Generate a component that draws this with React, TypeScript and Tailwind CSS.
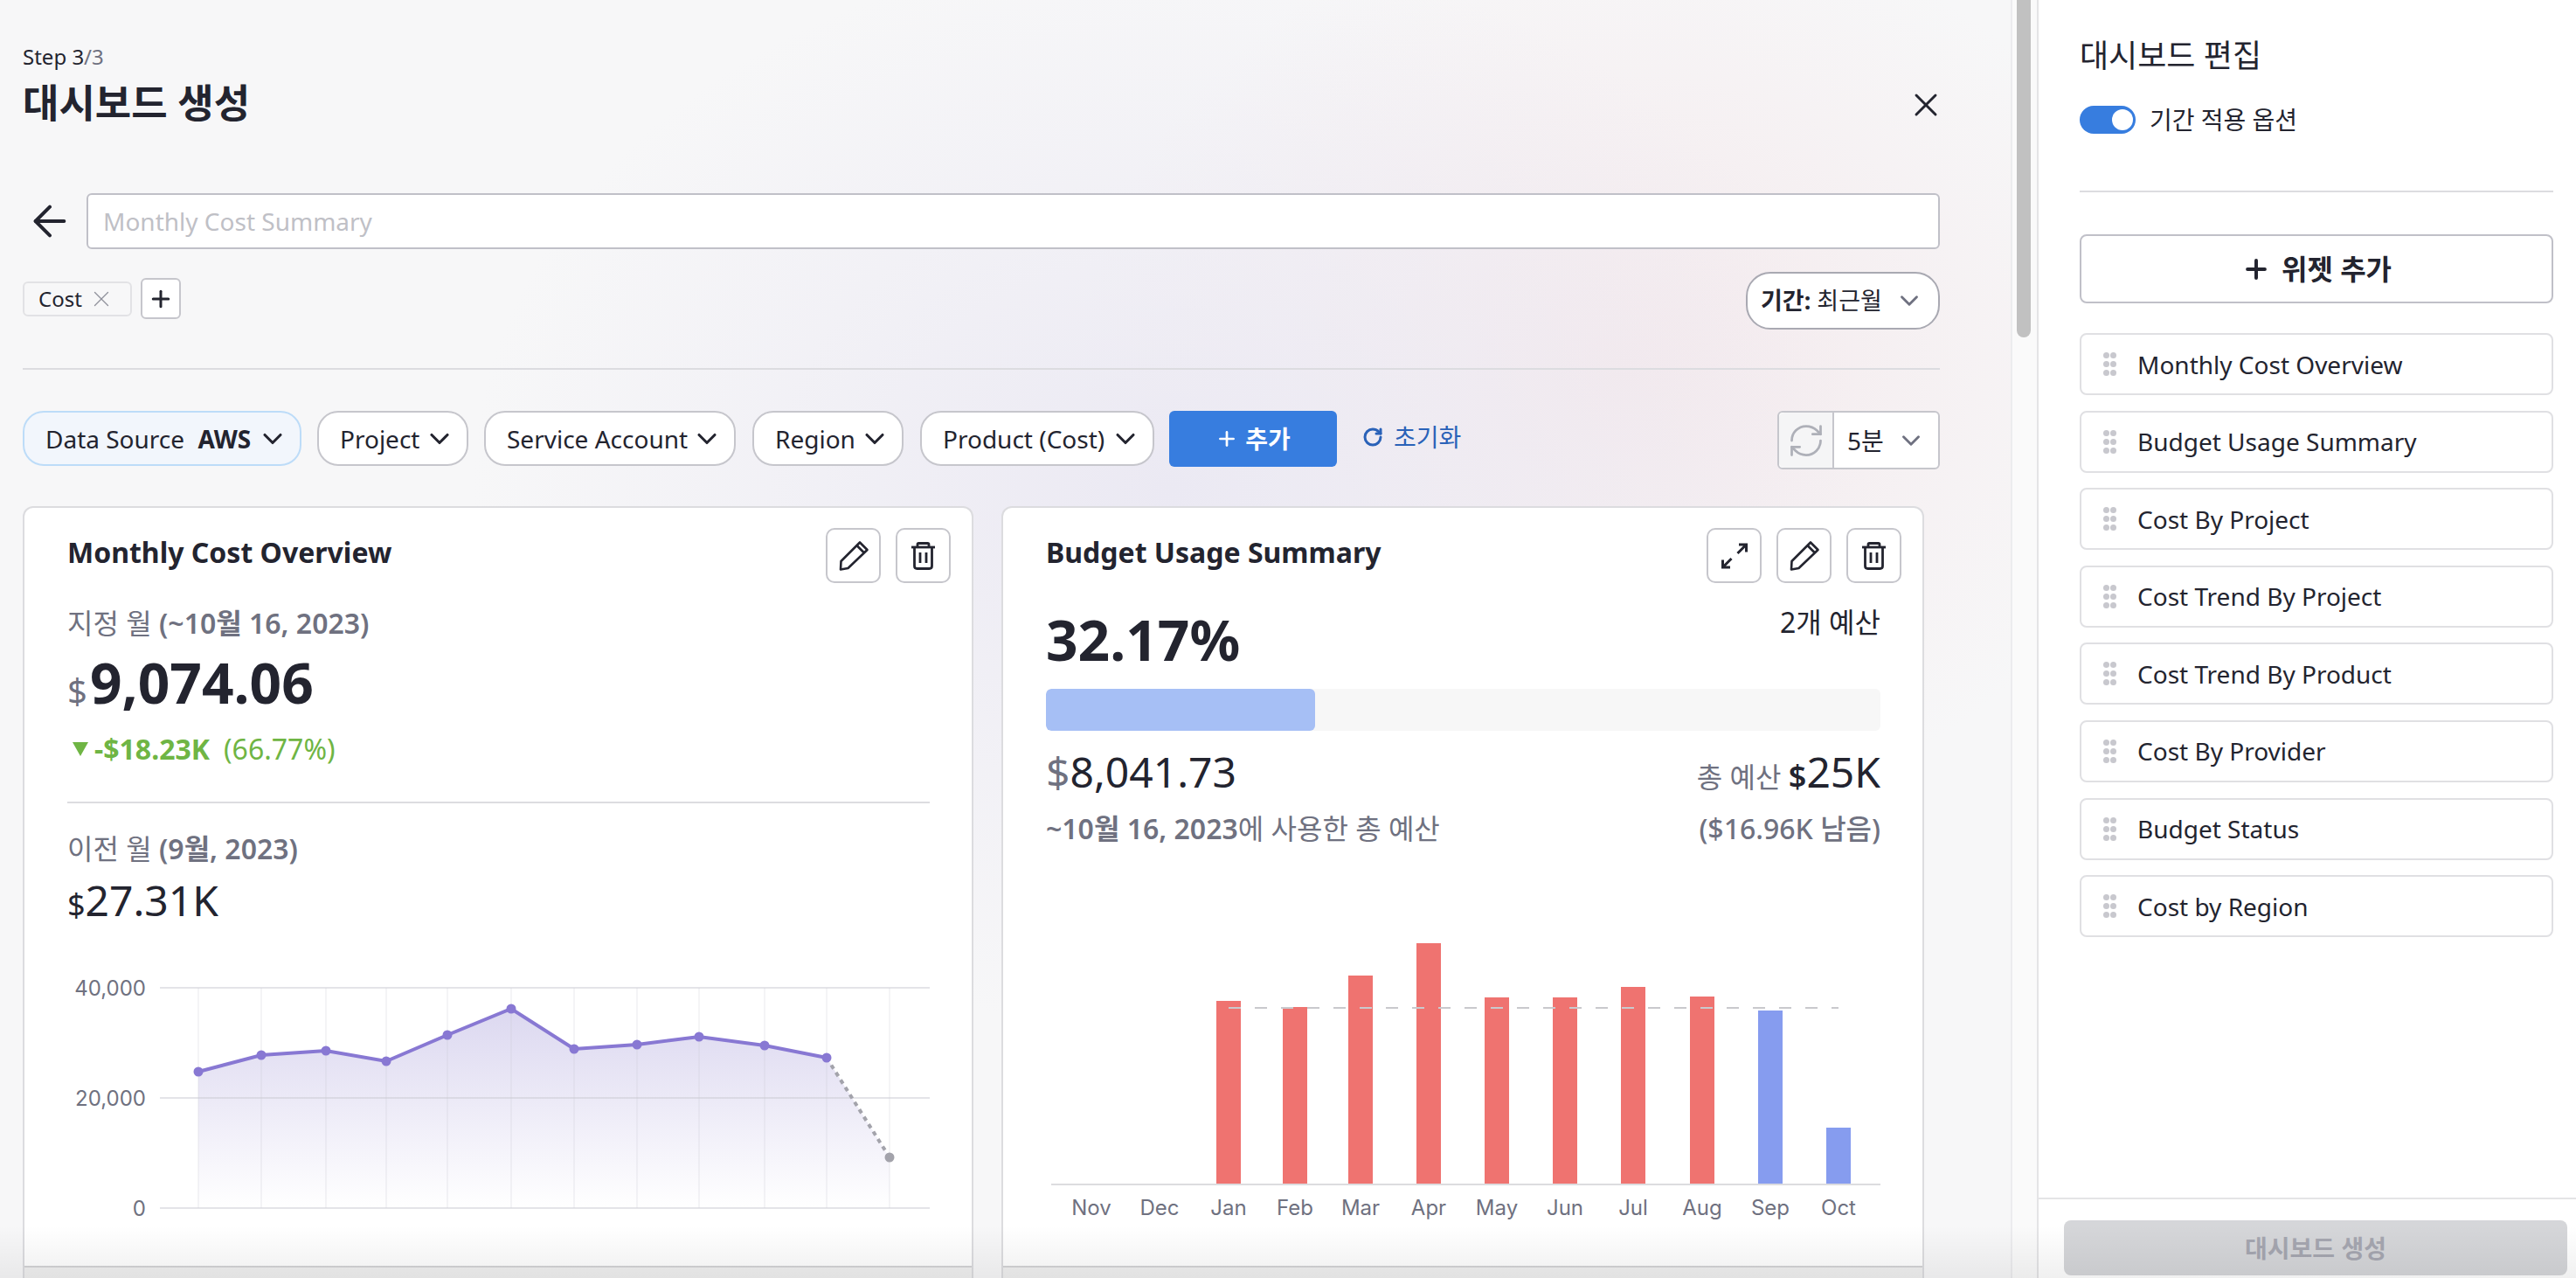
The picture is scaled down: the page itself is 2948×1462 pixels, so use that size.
import React from "react";
import { ArrowLeft, ChevronDown, Plus, RefreshCw, RotateCw, X } from "lucide-react";

const widgets = [
  "Monthly Cost Overview",
  "Budget Usage Summary",
  "Cost By Project",
  "Cost Trend By Project",
  "Cost Trend By Product",
  "Cost By Provider",
  "Budget Status",
  "Cost by Region",
];

// line chart points, page coordinates
const linePoints: [number, number][] = [
  [227, 1226], [299, 1207], [373, 1202], [442, 1214], [512, 1184], [585, 1154],
  [657, 1200], [729, 1195], [800, 1186], [875, 1196], [946, 1210],
];
const lastPoint: [number, number] = [1018, 1324];
const gridX = [227, 299, 373, 442, 512, 585, 657, 729, 800, 875, 946, 1018];

const bars = [
  { m: "Nov", x: 1249, top: 1355, c: "#ef7370" },
  { m: "Dec", x: 1327, top: 1355, c: "#ef7370" },
  { m: "Jan", x: 1406, top: 1145, c: "#ef7370" },
  { m: "Feb", x: 1482, top: 1152, c: "#ef7370" },
  { m: "Mar", x: 1557, top: 1116, c: "#ef7370" },
  { m: "Apr", x: 1635, top: 1079, c: "#ef7370" },
  { m: "May", x: 1713, top: 1141, c: "#ef7370" },
  { m: "Jun", x: 1791, top: 1141, c: "#ef7370" },
  { m: "Jul", x: 1869, top: 1129, c: "#ef7370" },
  { m: "Aug", x: 1948, top: 1140, c: "#ef7370" },
  { m: "Sep", x: 2026, top: 1156, c: "#869cef" },
  { m: "Oct", x: 2104, top: 1290, c: "#869cef" },
];

const TrashIcon = () => (
  <svg width="27" height="32" viewBox="0 0 27 32" fill="none" stroke="#23242f" strokeWidth="2.800" strokeLinejoin="round">
    <path d="M0 6H27" />
    <path d="M7 6V2.800Q7 1.500 8.300 1.500H18.700Q20 1.500 20 2.800V6" />
    <path d="M3.500 6V27.500Q3.500 30.500 6.500 30.500H20.500Q23.500 30.500 23.500 27.500V6" />
    <path d="M10 12V24M17 12V24" />
  </svg>
);

const PencilIcon = () => (
  <svg width="36" height="36" viewBox="0 0 36 36" fill="none" stroke="#23242f" strokeWidth="2.600" strokeLinejoin="round">
    <path d="M3.500 24L25 2.500L33.500 11L11.500 32L3 33.500Z" />
    <path d="M21.500 6L30 14.500" />
  </svg>
);

const ExpandIcon = () => (
  <svg width="30" height="30" viewBox="0 0 30 30" fill="none" stroke="#23242f" strokeWidth="3">
    <path d="M20 2H28.500V10.500M28.500 2L18.500 12" />
    <path d="M1.500 19.500V28H10M1.500 28L11.500 18" />
  </svg>
);

const IconButton = ({ children }: { children: React.ReactNode }) => (
  <button className="flex h-[63px] w-[63px] items-center justify-center rounded-[10px] border-2 border-[#c6c6cc] bg-white">
    {children}
  </button>
);

const FilterPill = ({ width, children, active }: { width: string; children: React.ReactNode; active?: boolean }) => (
  <button
    className={`flex h-[63px] ${width} items-center justify-between whitespace-nowrap rounded-[24px] border-2 pl-[24px] pr-[13px] text-[28px] text-[#23242f] ${
      active ? "border-[#bddcf8] bg-[#f2f6fc]" : "border-[#c6c6cc] bg-white"
    }`}
  >
    {children}
    <ChevronDown size={36} strokeWidth={2.100} />
  </button>
);

const DragDots = () => (
  <div className="grid w-[15px] grid-cols-2 gap-x-[1px] gap-y-[3px]">
    {[0, 1, 2, 3, 4, 5].map((i) => (
      <span key={i} className="h-[7px] w-[7px] rounded-full bg-[#c8c8ce]" />
    ))}
  </div>
);

const LineChart = () => {
  const line = linePoints.map((p) => p.join(",")).join(" ");
  const area = `227,1382 ${line} ${lastPoint.join(",")} 1018,1382`;
  return (
    <svg viewBox="28 1110 1084 300" className="mt-[50px] block h-[300px] w-[1084px]">
      <defs>
        <linearGradient id="areaFill" x1="0" y1="0" x2="0" y2="1">
          <stop offset="0" stopColor="#dcd8f0" />
          <stop offset="1" stopColor="#ffffff" />
        </linearGradient>
      </defs>
      <polygon points={area} fill="url(#areaFill)" />
      {gridX.map((x) => (
        <line key={x} x1={x} x2={x} y1={1130} y2={1382} stroke="#c9c9d2" strokeOpacity="0.4" />
      ))}
      {[1130, 1256, 1382].map((y) => (
        <line key={y} x1={183} x2={1064} y1={y} y2={y} stroke="#c9c9d2" strokeOpacity="0.5" strokeWidth="2" />
      ))}
      {[["40,000", 1130], ["20,000", 1256], ["0", 1382]].map(([t, y]) => (
        <text key={t} x={167} y={Number(y) + 9} textAnchor="end" fontSize="24" fill="#6f7180" fontFamily="Inter, sans-serif">
          {t}
        </text>
      ))}
      <polyline points={line} fill="none" stroke="#8878d3" strokeWidth="4" />
      <line x1={946} y1={1210} x2={1018} y2={1324} stroke="#a3a3ab" strokeWidth="4" strokeDasharray="5 5" />
      {linePoints.map(([x, y]) => (
        <circle key={x} cx={x} cy={y} r="5.500" fill="#8878d3" />
      ))}
      <circle cx={lastPoint[0]} cy={lastPoint[1]} r="5.500" fill="#a3a3ab" />
    </svg>
  );
};

const BarChart = () => (
  <svg viewBox="1148 1040 1052 370" className="mt-[72px] block h-[370px] w-[1052px]">
    {bars.map((b) => (
      <g key={b.m}>
        <rect x={b.x - 14} y={b.top} width={28} height={1355 - b.top} fill={b.c} />
        <text x={b.x} y={1390} textAnchor="middle" fontSize="24" fill="#6f7180" fontFamily="Inter, sans-serif">
          {b.m}
        </text>
      </g>
    ))}
    <line x1={1406} x2={2104} y1={1153} y2={1153} stroke="#c9c9cd" strokeWidth="2" strokeDasharray="14 16" />
    <line x1={1203} x2={2152} y1={1355} y2={1355} stroke="#dcdcdf" strokeWidth="2" />
  </svg>
);

const CardFooter = () => <div className="mt-auto h-[14px] shrink-0 border-t-2 border-[#d4d4d6] bg-[#f0f0f0]" />;

export default function App() {
  return (
    <div className="relative flex h-[1462px] w-[2948px] overflow-hidden bg-white font-['Noto_Sans','Noto_Sans_CJK_KR',sans-serif] text-[#23242f]">
      {/* main column */}
      <div className="h-full w-[2301px] shrink-0 overflow-hidden bg-[#f7f7f8] bg-[radial-gradient(ellipse_800px_620px_at_1340px_560px,#ebe9f3,transparent),radial-gradient(ellipse_620px_520px_at_1860px_420px,#f4e9ec,transparent)] pl-[26px] pr-[81px] pt-[49px]">
        <div className="flex justify-between">
          <div>
            <div className="h-[32px] text-[24px] leading-[32px]">
              Step 3<span className="text-[#6f7180]">/3</span>
            </div>
            <h1 className="mt-[7px] h-[60px] text-[45px] font-bold leading-[60px]">대시보드 생성</h1>
          </div>
          <button className="mr-[-6px] mt-[49px] h-[44px]">
            <X size={44} strokeWidth={1.600} />
          </button>
        </div>

        <div className="mt-[73px] flex items-center">
          <ArrowLeft size={56} strokeWidth={1.700} className="ml-[3px]" />
          <div className="ml-[14px] flex h-[64px] flex-1 items-center rounded-[6px] border-2 border-[#c0c0c8] bg-white pl-[17px] text-[28px] text-[#bfc0c6]">
            Monthly Cost Summary
          </div>
        </div>

        <div className="mt-[26px] flex items-start justify-between">
          <div className="mt-[7px] flex items-center gap-[10px]">
            <div className="flex h-[40px] w-[125px] items-center rounded-[6px] border-2 border-[#e2e2e5] bg-[#f7f7f8] pl-[16px] text-[24px]">
              Cost
              <X size={30} strokeWidth={1} className="ml-[7px] text-[#8f909a]" />
            </div>
            <button className="flex h-[47px] w-[46px] items-center justify-center rounded-[6px] border-2 border-[#c6c6cc] bg-white">
              <Plus size={30} strokeWidth={2.400} />
            </button>
          </div>
          <button className="flex h-[66px] w-[222px] items-center justify-between rounded-[28px] border-2 border-[#a9a9b2] bg-white pl-[15px] pr-[16px] text-[27px]">
            <span>
              <b className="font-bold">기간:</b> 최근월
            </span>
            <ChevronDown size={34} strokeWidth={2} className="text-[#6f7180]" />
          </button>
        </div>

        <div className="mt-[44px] h-[2px] bg-[#dcdce0]" />

        <div className="mt-[47px] flex h-[67px] items-start">
          <FilterPill width="w-[319px]" active>
            <span>
              Data Source <b className="ml-[8px] font-bold">AWS</b>
            </span>
          </FilterPill>
          <div className="ml-[18px] flex gap-[19px]">
            <FilterPill width="w-[173px]">Project</FilterPill>
            <FilterPill width="w-[288px] -ml-[1px]">Service Account</FilterPill>
            <FilterPill width="w-[173px]">Region</FilterPill>
            <FilterPill width="w-[268px]">Product (Cost)</FilterPill>
          </div>
          <button className="ml-[17px] flex h-[64px] w-[192px] items-center justify-center gap-[8px] rounded-[6px] bg-[#377ddf] text-[28px] font-bold text-white">
            <Plus size={26} strokeWidth={2.500} />
            추가
          </button>
          <button className="ml-[29px] flex h-[60px] items-center gap-[12px] text-[28px] text-[#2a62b8]">
            <RotateCw size={24} strokeWidth={3} />
            초기화
          </button>
          <div className="ml-auto flex h-[67px] w-[186px] rounded-[6px] border-2 border-[#c6c6cc] bg-white">
            <div className="flex w-[63px] items-center justify-center rounded-l-[6px] border-r-2 border-[#c6c6cc] bg-[#f5f5f6]">
              <RefreshCw size={44} strokeWidth={1.500} className="text-[#aeb0b8]" />
            </div>
            <div className="flex flex-1 items-center justify-between pl-[15px] pr-[14px] text-[28px]">
              5분
              <ChevronDown size={34} strokeWidth={2} className="text-[#6f7180]" />
            </div>
          </div>
        </div>

        <div className="mt-[42px] flex gap-[32px]">
          {/* Monthly Cost Overview */}
          <div className="flex h-[883px] w-[1088px] shrink-0 flex-col rounded-t-[12px] border-2 border-b-0 border-[#dcdcdf] bg-white pt-[23px]">
            <div className="flex items-start justify-between pl-[49px] pr-[24px]">
              <h2 className="mt-[6px] text-[32px] font-bold leading-[44px]">Monthly Cost Overview</h2>
              <div className="flex gap-[17px]">
                <IconButton><PencilIcon /></IconButton>
                <IconButton><TrashIcon /></IconButton>
              </div>
            </div>
            <div className="pl-[49px] pr-[48px]">
              <div className="mt-[26px] h-[40px] text-[32px] leading-[40px] text-[#6f7180]">
                지정 월 <b className="font-semibold">(~10월 16, 2023)</b>
              </div>
              <div className="mt-[8px] h-[80px] text-[64px] font-bold leading-[80px]">
                <span className="mr-[3px] text-[40px] font-normal text-[#6f7180]">$</span>9,074.06
              </div>
              <div className="mt-[16px] flex h-[40px] items-center text-[32px] leading-[40px] text-[#6fb544]">
                <svg width="18" height="16" viewBox="0 0 18 16" className="ml-[6px] mr-[7px]">
                  <polygon points="0,0 18,0 9,16" fill="#6fb544" />
                </svg>
                <b className="font-bold">-$18.23K</b>
                <span className="ml-[16px]">(66.77%)</span>
              </div>
              <div className="mt-[40px] h-[2px] bg-[#dcdce0]" />
              <div className="mt-[32px] h-[40px] text-[32px] leading-[40px] text-[#6f7180]">
                이전 월 <b className="font-semibold">(9월, 2023)</b>
              </div>
              <div className="mt-[9px] h-[60px] text-[48px] leading-[60px]">
                <span className="text-[36px]">$</span>27.31K
              </div>
            </div>
            <LineChart />
            <CardFooter />
          </div>

          {/* Budget Usage Summary */}
          <div className="flex h-[883px] w-[1056px] shrink-0 flex-col rounded-t-[12px] border-2 border-b-0 border-[#dcdcdf] bg-white pt-[23px]">
            <div className="flex items-start justify-between pl-[49px] pr-[24px]">
              <h2 className="mt-[6px] text-[32px] font-bold leading-[44px]">Budget Usage Summary</h2>
              <div className="flex gap-[17px]">
                <IconButton><ExpandIcon /></IconButton>
                <IconButton><PencilIcon /></IconButton>
                <IconButton><TrashIcon /></IconButton>
              </div>
            </div>
            <div className="pl-[49px] pr-[48px]">
              <div className="mt-[25px] flex items-start justify-between">
                <div className="h-[80px] text-[64px] font-bold leading-[80px]">32.17%</div>
                <div className="h-[40px] text-[32px] leading-[40px]">2개 예산</div>
              </div>
              <div className="mt-[16px] h-[48px] overflow-hidden rounded-[6px] bg-[#f7f7f7]">
                <div className="h-full w-[308px] rounded-[6px] bg-[#a6bff5]" />
              </div>
              <div className="mt-[17px] flex h-[60px] items-baseline justify-between text-[48px] leading-[60px]">
                <div>
                  <span className="text-[#6f7180]">$</span>8,041.73
                </div>
                <div>
                  <span className="text-[32px] text-[#6f7180]">총 예산 </span>
                  <span className="text-[36px] font-semibold">$</span>25K
                </div>
              </div>
              <div className="mt-[15px] flex h-[40px] justify-between text-[32px] leading-[40px] text-[#6f7180]">
                <div>
                  <b className="font-semibold">~10월 16, 2023</b>에 사용한 총 예산
                </div>
                <div className="font-medium">($16.96K 남음)</div>
              </div>
            </div>
            <BarChart />
            <CardFooter />
          </div>
        </div>
      </div>

      {/* scroll gutter */}
      <div className="h-full w-[30px] shrink-0 border-l-2 border-[#ececee] bg-[#fafafa] pl-[5px]">
        <div className="h-[386px] w-[16px] rounded-b-full bg-[#c1c1c1]" />
      </div>

      {/* edit panel */}
      <div className="flex h-full flex-1 flex-col border-l-2 border-[#e4e4e6] bg-white">
        <div className="pl-[47px] pr-[26px] pt-[40px]">
          <h2 className="h-[48px] text-[36px] leading-[48px]">대시보드 편집</h2>
          <div className="mt-[33px] flex h-[32px] items-center gap-[16px]">
            <div className="flex h-[32px] w-[64px] items-center justify-end rounded-full bg-[#377ddf] pr-[3px]">
              <span className="h-[24px] w-[24px] rounded-full bg-white" />
            </div>
            <span className="text-[28px]">기간 적용 옵션</span>
          </div>
          <div className="mt-[65px] h-[2px] bg-[#dcdce0]" />
          <button className="mt-[48px] flex h-[79px] w-full items-center justify-center gap-[12px] rounded-[8px] border-2 border-[#c0c0c8] bg-white text-[32px] font-bold">
            <Plus size={34} strokeWidth={2.800} />
            위젯 추가
          </button>
          <div className="mt-[34px] flex flex-col gap-[17.600px]">
            {widgets.map((w) => (
              <div key={w} className="flex h-[71px] items-center rounded-[8px] border-2 border-[#e0e0e3] bg-white pl-[25px] text-[28px]">
                <DragDots />
                <span className="ml-[24px]">{w}</span>
              </div>
            ))}
          </div>
        </div>
        <div className="mt-auto border-t-2 border-[#e4e4e6] pb-[3px] pl-[29px] pr-[10px] pt-[24px]">
          <button className="flex h-[63px] w-full items-center justify-center rounded-[8px] bg-[#d5d6d9] text-[28px] font-bold text-[#a5a6b0]">
            대시보드 생성
          </button>
        </div>
      </div>

      {/* bottom fade over the page */}
      <div className="pointer-events-none absolute bottom-0 left-0 h-[60px] w-full bg-gradient-to-b from-transparent to-[#0000000f]" />
    </div>
  );
}
